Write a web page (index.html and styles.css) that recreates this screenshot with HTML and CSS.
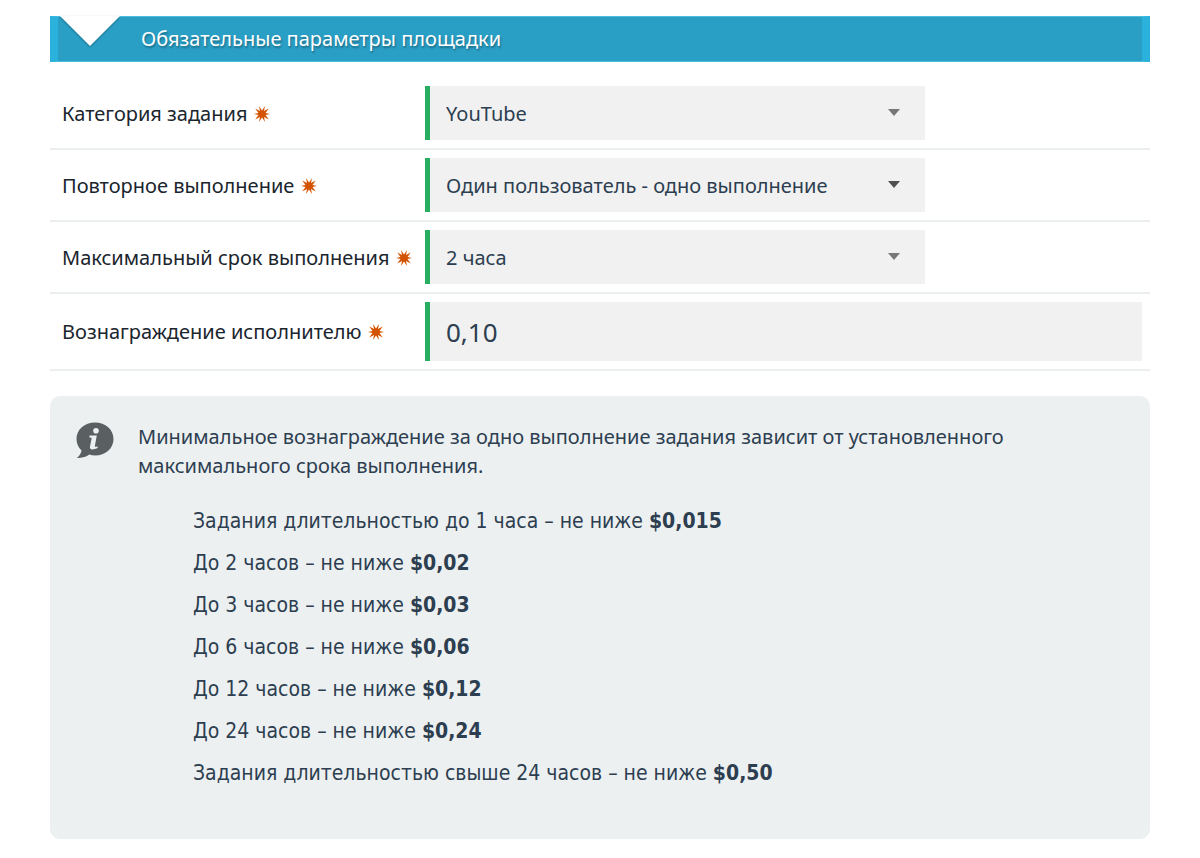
FILE: index.html
```
<!DOCTYPE html>
<html lang="ru">
<head>
    <meta charset="UTF-8">
    <meta name="viewport" content="width=device-width, initial-scale=1.0">
    <title>Обязательные параметры площадки</title>
    <link rel="stylesheet" href="styles.css">
</head>
<body>
    <svg class="sprite" aria-hidden="true">
        <symbol id="star" viewBox="0 0 16 16">
            <path d="M11 0 L10 5 L14.800 2.600 L11.500 6.900 L16 8 L11.500 9.100 L14.800 13.400 L10 11 L11 16 L8 11.600 L5 16 L6 11 L1.200 13.400 L4.500 9.100 L0 8 L4.500 6.900 L1.200 2.600 L6 5 L5 0 L8 4.400 Z"/>
        </symbol>
    </svg>

    <div class="container">
        <div class="section-header">
            <h2>Обязательные параметры площадки</h2>
            <svg class="section-arrow" viewBox="0 0 60 32" aria-hidden="true">
                <path d="M0 0 H60 L30 30 Z"/>
            </svg>
        </div>

        <form class="params-form">
            <div class="form-row">
                <label for="category">Категория задания <svg class="required"><use href="#star"/></svg></label>
                <div class="select-box">
                    <select id="category" class="field">
                        <option>YouTube</option>
                    </select>
                    <svg class="caret" viewBox="0 0 12 7" aria-hidden="true"><path d="M0 0 H12 L6 7 Z"/></svg>
                </div>
            </div>
            <div class="form-row">
                <label for="repeat">Повторное выполнение <svg class="required"><use href="#star"/></svg></label>
                <div class="select-box active">
                    <select id="repeat" class="field">
                        <option>Один пользователь - одно выполнение</option>
                    </select>
                    <svg class="caret" viewBox="0 0 12 7" aria-hidden="true"><path d="M0 0 H12 L6 7 Z"/></svg>
                </div>
            </div>
            <div class="form-row">
                <label for="term">Максимальный срок выполнения <svg class="required"><use href="#star"/></svg></label>
                <div class="select-box">
                    <select id="term" class="field">
                        <option>2 часа</option>
                    </select>
                    <svg class="caret" viewBox="0 0 12 7" aria-hidden="true"><path d="M0 0 H12 L6 7 Z"/></svg>
                </div>
            </div>
            <div class="form-row">
                <label for="reward">Вознаграждение исполнителю <svg class="required"><use href="#star"/></svg></label>
                <input type="text" id="reward" class="field field-price" value="0,10">
            </div>
        </form>

        <div class="info-box">
            <svg class="info-icon" viewBox="0 0 38 38" aria-hidden="true">
                <path class="bubble" d="M19 0.5 C29.5 0.5 37.5 7.5 37.5 17 C37.5 26.500 29.500 33.500 19 33.500 C16.800 33.500 15 33.200 13.300 32.600 C10 35 5.500 36.400 0.700 35.800 C3.300 34.200 5 31.500 5.500 28.500 C2.300 25.500 0.500 21.500 0.500 17 C0.500 7.500 8.500 0.500 19 0.500 Z"/>
                <circle class="mark" cx="20" cy="8.800" r="2.800"/>
                <path class="mark" d="M13.600 13.500 H20.800 L18.900 23.800 C18.700 25 19.200 25 21.800 24.400 L21.500 26 C19 27.100 17.500 27.500 16 27.400 C14.200 27.300 13.700 26.200 14 24.600 L15.600 16.500 C15.800 15.700 15.300 15.600 13.300 15.600 Z"/>
            </svg>
            <div class="info-content">
                <p>Минимальное вознаграждение за одно выполнение задания зависит от установленного максимального срока выполнения.</p>
                <ul>
                    <li>Задания длительностью до 1 часа – не ниже <strong>$0,015</strong></li>
                    <li>До 2 часов – не ниже <strong>$0,02</strong></li>
                    <li>До 3 часов – не ниже <strong>$0,03</strong></li>
                    <li>До 6 часов – не ниже <strong>$0,06</strong></li>
                    <li>До 12 часов – не ниже <strong>$0,12</strong></li>
                    <li>До 24 часов – не ниже <strong>$0,24</strong></li>
                    <li>Задания длительностью свыше 24 часов – не ниже <strong>$0,50</strong></li>
                </ul>
            </div>
        </div>
    </div>
</body>
</html>
```
FILE: styles.css
```
* {
    margin: 0;
    padding: 0;
    box-sizing: border-box;
}

body {
    font-family: Tahoma, 'Noto Sans', sans-serif;
    font-size: 20px;
    line-height: 29px;
    color: #1a252d;
    background-color: #fff;
}

.sprite {
    display: none;
}

.container {
    padding: 16px 50px 19px;
}

.section-header {
    position: relative;
    padding: 7px 91px 8px 83px;
    background-color: #2a9fc5;
    border: 1px solid #4dbdde;
    border-width: 1px 8px;
    border-color: #4dbdde #2bb2dc;
    margin-bottom: 16px;
}

.section-header h2 {
    font-size: 20px;
    font-weight: normal;
    color: #fff;
    text-shadow: 1px 2px 2px rgba(0, 0, 0, 0.3);
}

/* white notch over the top edge of the bar */
.section-arrow {
    position: absolute;
    left: 2px;
    top: -1px;
    width: 60px;
    height: 32px;
    fill: #fff;
    filter: drop-shadow(0 1px 1px rgba(0, 0, 0, 0.3));
}

.form-row {
    display: flex;
    align-items: center;
    padding: 8px 8px 8px 12px;
    border-bottom: 2px solid #eceff0;
}

.form-row label {
    flex: 0 0 363px;
    white-space: nowrap;
}

.required {
    width: 16px;
    height: 16px;
    margin-left: 1px;
    vertical-align: -1px;
    fill: #d35400;
}

.select-box {
    position: relative;
    flex: 0 1 500px;
}

.field {
    display: block;
    width: 100%;
    height: 54px;
    padding: 0 50px 0 16px;
    font-family: inherit;
    font-size: 20px;
    color: #2c3e50;
    background-color: #f1f1f1;
    border: none;
    border-left: 5px solid #27ae60;
    border-radius: 0;
    outline: none;
    appearance: none;
}

.field-price {
    flex: 1;
    min-width: 0;
    height: 59px;
    padding: 0 16px;
    font-size: 26px;
}

.caret {
    position: absolute;
    right: 25px;
    top: 23px;
    width: 12px;
    height: 7px;
    fill: #777;
    pointer-events: none;
}

.active .caret {
    fill: #505050;
}

.info-box {
    display: flex;
    align-items: flex-start;
    gap: 24px;
    margin-top: 25px;
    padding: 26px 100px 45px 26px;
    color: #2c3e50;
    background-color: #ecf0f1;
    border-radius: 10px;
}

.info-icon {
    flex: none;
    width: 38px;
    height: 38px;
}

.info-icon .bubble {
    fill: #5a6061;
}

.info-icon .mark {
    fill: #ecf0f1;
}

.info-content ul {
    list-style: none;
    margin-top: 20px;
    padding-left: 55px;
}

.info-content li {
    font-family: Tahoma, 'DejaVu Sans Condensed', sans-serif;
    font-size: 21px;
    line-height: 42px;
}
```
